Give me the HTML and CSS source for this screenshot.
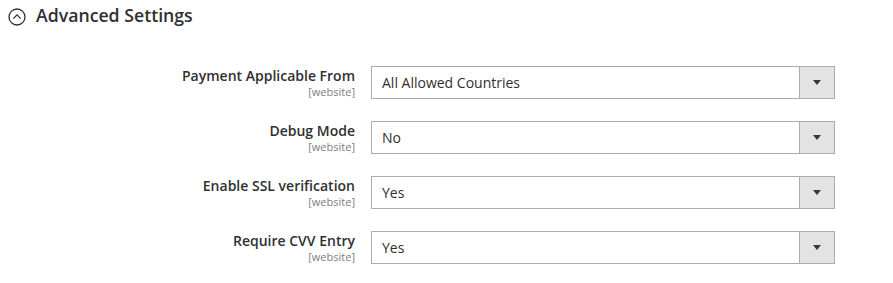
FILE: index.html
```html
<!DOCTYPE html>
<html>
<head>
<meta charset="utf-8">
<link rel="stylesheet" href="styles.css">
</head>
<body>
<div class="section">
  <div class="section-title">
    <svg class="toggle" width="18" height="18" viewBox="0 0 18 18">
      <circle cx="9" cy="9" r="8" fill="none" stroke="#303030" stroke-width="1.3"/>
      <path d="M5.3 10.6 L9 6.9 L12.7 10.6" fill="none" stroke="#303030" stroke-width="1.3"/>
    </svg>
    <span>Advanced Settings</span>
  </div>
  <div class="rows">
    <div class="row">
      <div class="label"><span class="name">Payment Applicable From</span><span class="scope">[website]</span></div>
      <div class="select"><span class="value">All Allowed Countries</span><span class="btn"><span class="arrow"></span></span></div>
    </div>
    <div class="row">
      <div class="label"><span class="name">Debug Mode</span><span class="scope">[website]</span></div>
      <div class="select"><span class="value">No</span><span class="btn"><span class="arrow"></span></span></div>
    </div>
    <div class="row">
      <div class="label"><span class="name">Enable SSL verification</span><span class="scope">[website]</span></div>
      <div class="select"><span class="value">Yes</span><span class="btn"><span class="arrow"></span></span></div>
    </div>
    <div class="row">
      <div class="label"><span class="name">Require CVV Entry</span><span class="scope">[website]</span></div>
      <div class="select"><span class="value">Yes</span><span class="btn"><span class="arrow"></span></span></div>
    </div>
  </div>
</div>
</body>
</html>
```
FILE: styles.css
```css
* { box-sizing: border-box; }
html, body { margin: 0; padding: 0; background: #fff; }
body {
  font-family: "Open Sans", "Liberation Sans", sans-serif;
  color: #303030;
}
.section { padding: 0 0 0 8px; }
.section-title {
  display: flex;
  align-items: center;
  height: 29px;
  font-size: 17.7px;
  font-weight: 600;
  color: #303030;
}
.toggle { margin: 4px 10px 0 0; flex: none; }
.rows {
  display: flex;
  flex-direction: column;
  gap: 22px;
  padding-top: 37px;
}
.row {
  display: grid;
  grid-template-columns: 347px 464px;
  column-gap: 16px;
  align-items: start;
}
.label {
  display: flex;
  flex-direction: column;
  align-items: flex-end;
  padding-top: 1px;
}
.name {
  font-size: 14px;
  font-weight: 600;
  line-height: 18px;
  color: #303030;
}
.scope {
  font-size: 11px;
  line-height: 14px;
  color: #808080;
}
.select {
  display: flex;
  height: 33px;
  border: 1px solid #adadad;
  background: #fff;
}
.value {
  flex: 1;
  font-size: 14px;
  line-height: 31px;
  padding-left: 10px;
  color: #303030;
}
.btn {
  width: 35px;
  flex: none;
  border-left: 1px solid #adadad;
  background: #e3e3e3;
  display: flex;
  align-items: center;
  justify-content: center;
}
.arrow {
  width: 0;
  height: 0;
  border-left: 4.5px solid transparent;
  border-right: 4.5px solid transparent;
  border-top: 5px solid #41362f;
}
```
